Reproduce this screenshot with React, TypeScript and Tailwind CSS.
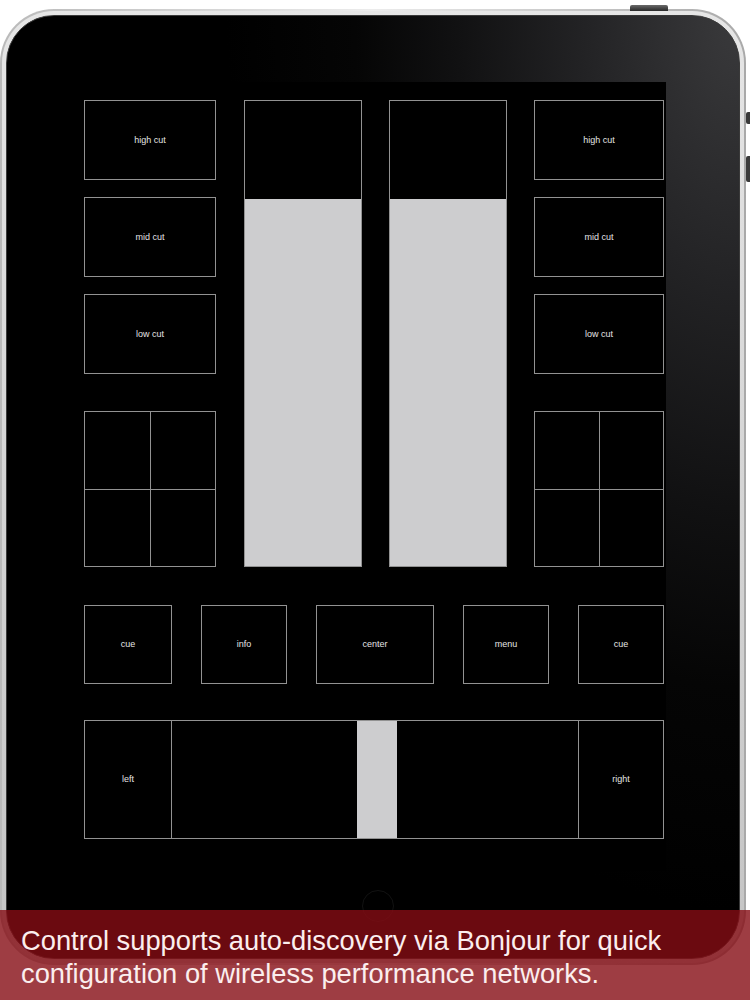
import React from 'react';

const font = { fontFamily: '"Liberation Sans", Arial, Helvetica, sans-serif' };

// a labelled pad with a thin grey outline
const Pad = ({ label, className = '' }: { label?: string; className?: string }) => (
    <div className={`flex items-center justify-center border border-[#929292] bg-black text-[9px] leading-none text-[#e4e4e4] antialiased ${className}`}>
        {label}
    </div>
);

const Quad = () => (
    <div className="grid h-[156px] grid-cols-2 grid-rows-2 border-l border-t border-[#929292]">
        <div className="border-b border-r border-[#929292]" />
        <div className="border-b border-r border-[#929292]" />
        <div className="border-b border-r border-[#929292]" />
        <div className="border-b border-r border-[#929292]" />
    </div>
);

const Fader = () => (
    <div className="flex h-[467px] w-[118px] flex-col border border-[#929292]">
        <div className="h-[98px] bg-black" />
        <div className="flex-1 bg-[#cdcdcf]" />
    </div>
);

const EqColumn = ({ width }: { width: string }) => (
    <div className={`flex flex-col ${width}`}>
        <Pad label="high cut" className="h-[80px]" />
        <Pad label="mid cut" className="mt-[17px] h-[80px]" />
        <Pad label="low cut" className="mt-[17px] h-[80px]" />
        <div className="mt-[37px]">
            <Quad />
        </div>
    </div>
);

export default function App() {
    return (
        <div className="relative h-[1000px] w-[750px] overflow-hidden bg-white" style={font}>
            {/* hardware buttons */}
            <div className="absolute left-[630px] top-[5px] h-[6px] w-[38px] rounded-t-[2px] bg-gradient-to-b from-[#6a6a6a] to-[#2a2a2a]" />
            <div className="absolute right-0 top-[112px] h-[12px] w-[4px] rounded-l-[2px] bg-[#3a3a3a]" />
            <div className="absolute right-0 top-[156px] h-[26px] w-[4px] rounded-l-[2px] bg-[#3a3a3a]" />

            {/* ipad body */}
            <div className="mt-[9px] h-[956px] w-[746px] rounded-[54px] bg-gradient-to-r from-[#b9b9b9] via-[#ececec] to-[#a9a9a9] p-[2px]">
                <div className="h-full w-full rounded-[52px] bg-gradient-to-b from-[#e6e6e6] to-[#c4c4c4] p-[4px]">
                    <div className="h-full w-full rounded-[48px] border border-[#3a3a3a] bg-[radial-gradient(ellipse_70%_95%_at_100%_0%,#3a3a3c_0%,#232325_30%,#111112_55%,#050505_75%,#000_100%)] pl-[73px] pt-[66px]">
                        {/* screen */}
                        <div className="h-[789px] w-[586px] bg-black pl-[4px] pt-[18px]">
                            <div className="w-[580px]">
                                <div className="flex">
                                    <EqColumn width="w-[132px]" />
                                    <div className="ml-[28px]">
                                        <Fader />
                                    </div>
                                    <div className="ml-[27px]">
                                        <Fader />
                                    </div>
                                    <div className="ml-[27px]">
                                        <EqColumn width="w-[130px]" />
                                    </div>
                                </div>

                                <div className="mt-[38px] flex justify-between">
                                    <Pad label="cue" className="h-[79px] w-[88px]" />
                                    <Pad label="info" className="h-[79px] w-[86px]" />
                                    <Pad label="center" className="h-[79px] w-[118px]" />
                                    <Pad label="menu" className="h-[79px] w-[86px]" />
                                    <Pad label="cue" className="h-[79px] w-[86px]" />
                                </div>

                                {/* crossfader */}
                                <div className="mt-[36px] flex h-[119px] border border-[#929292]">
                                    <div className="flex w-[87px] items-center justify-center border-r border-[#929292] text-[9px] text-[#e4e4e4] antialiased">
                                        left
                                    </div>
                                    <div className="w-[185px]" />
                                    <div className="w-[40px] bg-[#cdcdcf]" />
                                    <div className="flex-1" />
                                    <div className="flex w-[85px] items-center justify-center border-l border-[#929292] text-[9px] text-[#e4e4e4] antialiased">
                                        right
                                    </div>
                                </div>
                            </div>
                        </div>
                        {/* home button */}
                        <div className="ml-[282px] mt-[19px] h-[32px] w-[32px] rounded-full border border-[#121212]" />
                    </div>
                </div>
            </div>

            {/* caption banner */}
            <div className="absolute bottom-0 left-0 h-[90px] w-full bg-[rgba(134,12,20,0.8)] pl-[21px] pt-[14px] text-[27.3px] leading-[33px] text-[#fbeeee] antialiased">
                Control supports auto-discovery via Bonjour for quick
                <br />
                configuration of wireless performance networks.
            </div>
        </div>
    );
}
